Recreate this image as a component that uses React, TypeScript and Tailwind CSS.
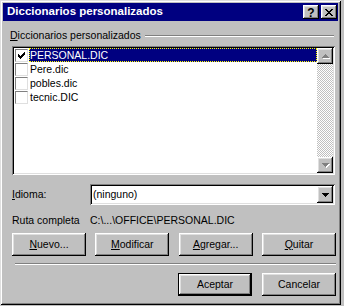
import React from 'react'

const raised = 'shadow-[inset_-1px_-1px_#000,inset_1px_1px_#fff,inset_-2px_-2px_#808080,inset_2px_2px_#dfdfdf]'
const sunken = 'shadow-[inset_1px_1px_#808080,inset_-1px_-1px_#fff,inset_2px_2px_#000,inset_-2px_-2px_#dfdfdf]'

function Btn({ children, isDefault }: { children: React.ReactNode; isDefault?: boolean }) {
  return (
    <div
      className={`w-[74px] h-[23px] bg-[#c0c0c0] flex items-center justify-center text-black ${raised} ${
        isDefault ? 'border border-black' : ''
      }`}
    >
      {children}
    </div>
  )
}

function ArrowUp() {
  return (
    <svg width="9" height="6" viewBox="0 0 9 6" shapeRendering="crispEdges">
      <path d="M4 1h1v1H4zM3 2h3v1H3zM2 3h5v1H2zM1 4h7v1H1z" fill="#fff" transform="translate(1 1)" />
      <path d="M4 1h1v1H4zM3 2h3v1H3zM2 3h5v1H2zM1 4h7v1H1z" fill="#808080" />
    </svg>
  )
}

function ArrowDown({ disabled }: { disabled?: boolean }) {
  const d = 'M1 1h7v1H1zM2 2h5v1H2zM3 3h3v1H3zM4 4h1v1H4z'
  return (
    <svg width="9" height="6" viewBox="0 0 9 6" shapeRendering="crispEdges">
      {disabled && <path d={d} fill="#fff" transform="translate(1 1)" />}
      <path d={d} fill={disabled ? '#808080' : '#000'} />
    </svg>
  )
}

function Check({ checked }: { checked?: boolean }) {
  return (
    <div className="w-[13px] h-[13px] bg-white border-t border-l border-[#808080] border-r-[#dfdfdf] border-b-[#dfdfdf] border-r border-b flex items-center justify-center shrink-0">
      {checked && (
        <svg width="9" height="9" viewBox="0 0 9 9" shapeRendering="crispEdges">
          <path d="M1 3h1v3H1zM2 4h1v3H2zM3 5h1v3H3zM4 4h1v3H4zM5 3h1v3H5zM6 2h1v3H6zM7 1h1v3H7z" fill="#000" />
        </svg>
      )}
    </div>
  )
}

const files = [
  { name: 'PERSONAL.DIC', checked: true, selected: true },
  { name: 'Pere.dic' },
  { name: 'pobles.dic' },
  { name: 'tecnic.DIC' },
]

export default function App() {
  return (
    <div className="w-[344px] h-[306px] bg-[#c0c0c0] font-['Liberation_Sans',Arial,sans-serif] text-[10.5px] text-black leading-none">
      <div className="w-[341px] h-[305px] p-[3px] bg-[#c0c0c0] flex flex-col shadow-[inset_1px_1px_#dfdfdf,inset_-1px_-1px_#000,inset_2px_2px_#fff,inset_-2px_-2px_#808080]">
        {/* Title bar */}
        <div className="h-[18px] bg-[#000080] flex items-center pl-[4px] pr-[1px]">
          <span className="text-white font-bold text-[11.5px] flex-1">Diccionarios personalizados</span>
          <div className={`w-[16px] h-[14px] bg-[#c0c0c0] flex items-center justify-center ${raised}`}>
            <span className="font-bold text-[12px] leading-none mt-[1px]">?</span>
          </div>
          <div className={`w-[16px] h-[14px] ml-[2px] bg-[#c0c0c0] flex items-center justify-center ${raised}`}>
            <svg width="8" height="7" viewBox="0 0 8 7" shapeRendering="crispEdges">
              <path d="M0 0h2v1H0zM6 0h2v1H6zM1 1h2v1H1zM5 1h2v1H5zM2 2h4v1H2zM3 3h2v1H3zM2 4h4v1H2zM1 5h2v1H1zM5 5h2v1H5zM0 6h2v1H0zM6 6h2v1H6z" fill="#000" />
            </svg>
          </div>
        </div>

        {/* Content */}
        <div className="flex flex-col pl-[9px] pr-[3px]">
          <div className="mt-[8px] h-[13px] flex items-center -ml-[2px]">
            <span>
              <span className="underline">D</span>iccionarios personalizados
            </span>
            <div className="flex-1 ml-[4px] mr-[1px] border-t border-[#808080] border-b border-b-white h-0" />
          </div>

          {/* List */}
          <div className={`mt-[4px] h-[129px] bg-white p-[2px] flex ${sunken}`}>
            <div className="flex-1 flex flex-col">
              {files.map(f => (
                <div key={f.name} className="h-[14px] flex items-center">
                  <div className="ml-[1px] mr-[1px]">
                    <Check checked={f.checked} />
                  </div>
                  <div
                    className={`h-[14px] flex items-center pl-[1px] ${
                      f.selected
                        ? 'flex-1 bg-[#000080] text-white outline outline-1 outline-dotted outline-[#ffff00] -outline-offset-1'
                        : ''
                    }`}
                  >
                    {f.name}
                  </div>
                </div>
              ))}
            </div>
            <div className="w-[16px] flex flex-col">
              <div className={`h-[16px] bg-[#c0c0c0] flex items-center justify-center ${raised}`}>
                <ArrowUp />
              </div>
              <div className="flex-1 [background:repeating-conic-gradient(#c0c0c0_0_25%,#fff_0_50%)_0_0/2px_2px]" />
              <div className={`h-[16px] bg-[#c0c0c0] flex items-center justify-center ${raised}`}>
                <ArrowDown disabled />
              </div>
            </div>
          </div>

          {/* Idioma */}
          <div className="mt-[9px] flex items-center">
            <span className="w-[78px]">
              <span className="underline">I</span>dioma:
            </span>
            <div className={`flex-1 h-[21px] bg-white p-[2px] flex items-center ${sunken}`}>
              <span className="flex-1 pl-[1px]">(ninguno)</span>
              <div className={`w-[16px] h-[17px] bg-[#c0c0c0] flex items-center justify-center ${raised}`}>
                <ArrowDown />
              </div>
            </div>
          </div>

          {/* Ruta */}
          <div className="mt-[8px] h-[14px] flex items-center">
            <span className="w-[78px]">Ruta completa</span>
            <span>C:\...\OFFICE\PERSONAL.DIC</span>
          </div>

          {/* Buttons */}
          <div className="mt-[6px] flex justify-between -mr-[1px]">
            <Btn>
              <span className="underline">N</span>uevo...
            </Btn>
            <Btn>
              <span className="underline">M</span>odificar
            </Btn>
            <Btn>
              <span className="underline">A</span>gregar...
            </Btn>
            <Btn>
              <span className="underline">Q</span>uitar
            </Btn>
          </div>

          <div className="mt-[7px] ml-[3px] -mr-[1px] border-t border-[#808080] border-b border-b-white h-0" />

          <div className="mt-[8px] flex justify-end gap-[10px] -mr-[1px]">
            <Btn isDefault>Aceptar</Btn>
            <Btn>Cancelar</Btn>
          </div>
        </div>
      </div>
    </div>
  )
}
